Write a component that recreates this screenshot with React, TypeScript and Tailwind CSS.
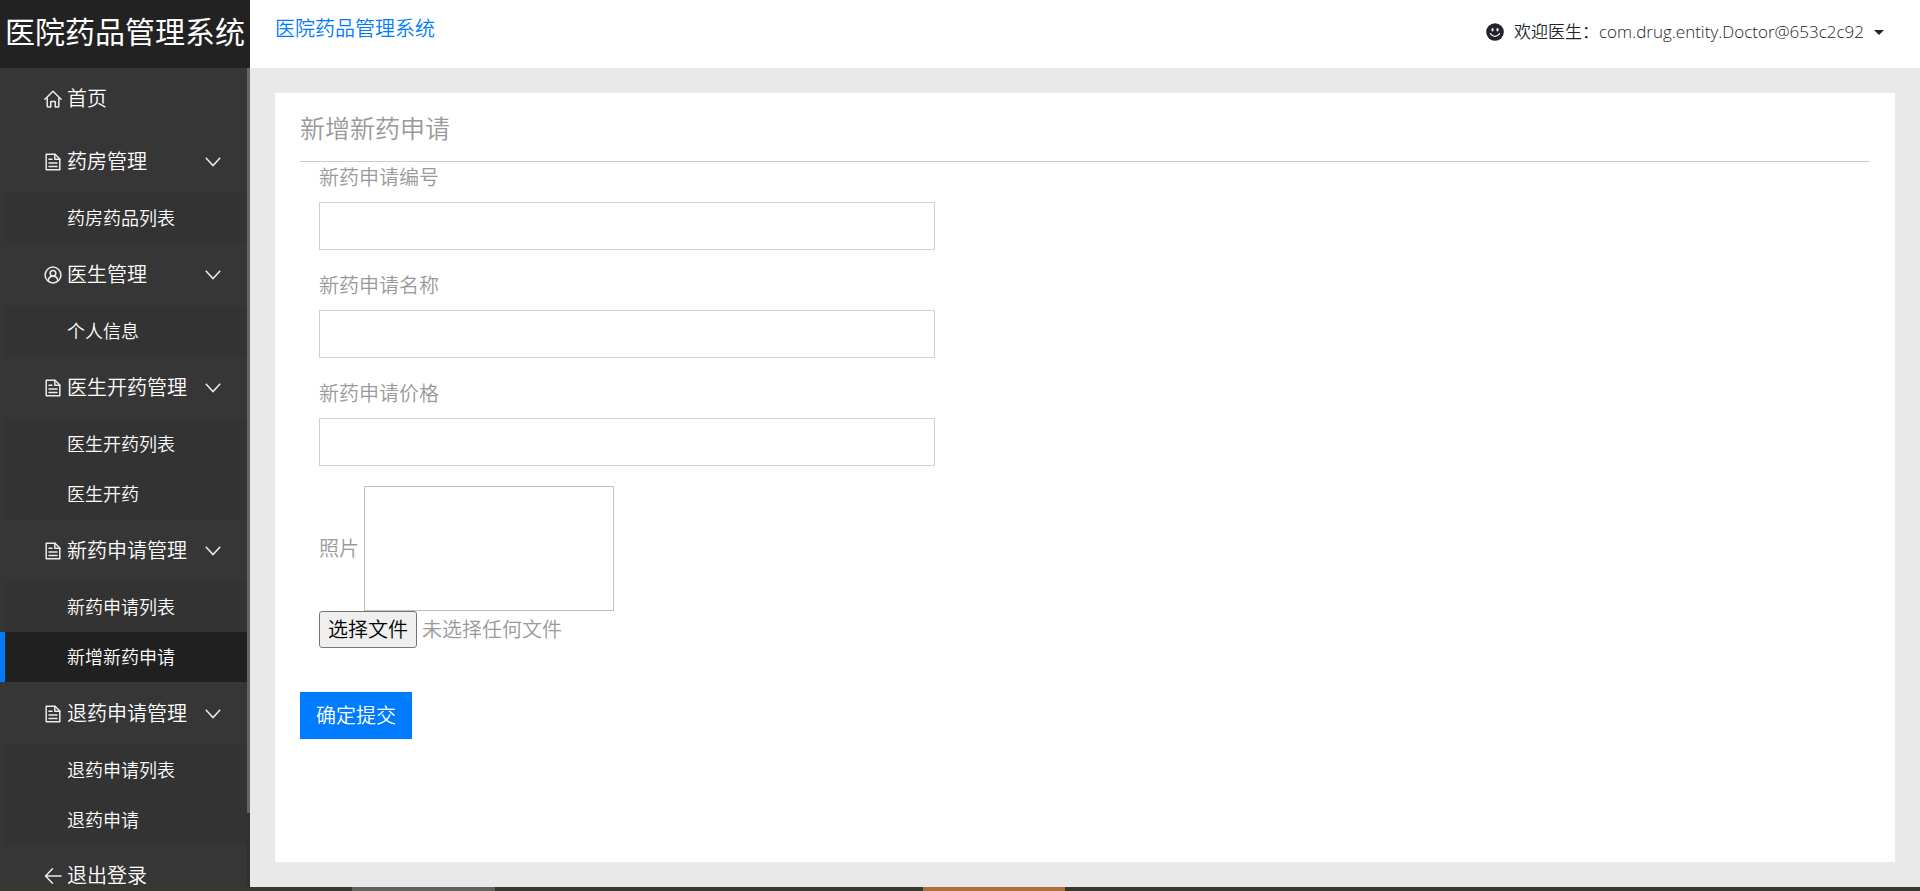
import { useState } from 'react';
import type { ReactNode } from 'react';

type IconName = 'home' | 'file' | 'user' | 'back';

interface MenuGroup {
  title: string;
  icon: IconName;
  items: string[];
}

const GROUPS: MenuGroup[] = [
  { title: '药房管理', icon: 'file', items: ['药房药品列表'] },
  { title: '医生管理', icon: 'user', items: ['个人信息'] },
  { title: '医生开药管理', icon: 'file', items: ['医生开药列表', '医生开药'] },
  { title: '新药申请管理', icon: 'file', items: ['新药申请列表', '新增新药申请'] },
  { title: '退药申请管理', icon: 'file', items: ['退药申请列表', '退药申请'] },
];

const ACTIVE_ITEM = '新增新药申请';

const FIELDS = [
  { id: 'drug-number', label: '新药申请编号' },
  { id: 'drug-name', label: '新药申请名称' },
  { id: 'drug-price', label: '新药申请价格' },
];

const ICON_SHAPES: Record<IconName, ReactNode> = {
  home: (
    <>
      <path d="M.9 9.300 9 1.300l8.100 8" />
      <path d="M3.200 8.300V16.300q0 .6.6.6H6.700V12q0-.6.6-.6h3.400q.6 0 .6.6v4.900h2.900q.6 0 .6-.6V8.300" />
    </>
  ),
  file: (
    <>
      <path d="M2.200 1.200H11L15.800 6V16.800H2.200Z" />
      <path d="M10.800 1.200V6.200H15.800" />
      <path d="M5 6.200h3M5 10h8M5 13.500h8" />
    </>
  ),
  user: (
    <>
      <circle cx="9" cy="9" r="7.900" />
      <circle cx="9" cy="7.200" r="2.800" />
      <path d="M4.200 14.900Q4.500 10.300 9 10.300T13.800 14.900" />
    </>
  ),
  back: <path d="M17 9H1.500M8.500 1.800 1.500 9l7 7.200" />,
};

function MenuIcon({ name }: { name: IconName }) {
  return (
    <svg
      viewBox="0 0 18 18"
      className="size-[18px] shrink-0"
      fill="none"
      stroke="#ececec"
      strokeWidth="1.5"
      strokeLinejoin="round"
      strokeLinecap="round"
      aria-hidden="true"
    >
      {ICON_SHAPES[name]}
    </svg>
  );
}

function Group({ group }: { group: MenuGroup }) {
  const [open, setOpen] = useState(true);
  return (
    <li>
      <button
        type="button"
        aria-expanded={open}
        onClick={() => setOpen(!open)}
        className="flex h-[63px] w-full cursor-pointer items-center gap-[5px] pr-[26px] pl-11 text-left text-xl"
      >
        <MenuIcon name={group.icon} />
        <span className="flex-1">{group.title}</span>
        <svg
          viewBox="0 0 16 10"
          className="h-2.5 w-4"
          fill="none"
          stroke="#ececec"
          strokeWidth="1.5"
          aria-hidden="true"
        >
          <path d="M.8.8 8 8.600 15.200.8" />
        </svg>
      </button>
      {open && (
        <ul>
          {group.items.map((item) => (
            <li key={item}>
              <a
                href="#"
                aria-current={item === ACTIVE_ITEM ? 'page' : undefined}
                className={
                  item === ACTIVE_ITEM
                    ? 'flex h-[50px] items-center border-l-5 border-[#007bff] bg-[#202020] pl-[62px] text-lg'
                    : 'flex h-[50px] items-center border-l-5 border-[#363636] bg-[#333333] pl-[62px] text-lg'
                }
              >
                {item}
              </a>
            </li>
          ))}
        </ul>
      )}
    </li>
  );
}

function Sidebar() {
  return (
    <aside className="flex w-[250px] shrink-0 flex-col bg-[#363636] text-white">
      <h1 className="flex h-[68px] shrink-0 items-center justify-center bg-[#222222] pb-1 text-3xl font-normal whitespace-nowrap">
        医院药品管理系统
      </h1>
      <div className="flex min-h-0 flex-1">
        <nav className="min-w-0 flex-1 overflow-hidden">
          <a href="#" className="flex h-[62px] items-center gap-[5px] pl-11 text-xl leading-none">
            <MenuIcon name="home" />
            首页
          </a>
          <ul>
            {GROUPS.map((group) => (
              <Group key={group.title} group={group} />
            ))}
          </ul>
          <a href="#" className="flex h-[62px] items-center gap-[5px] pl-11 text-xl leading-none">
            <MenuIcon name="back" />
            退出登录
          </a>
        </nav>
        <div className="w-[3px] bg-[#303030]">
          <div className="h-10/11 bg-[#666666]" />
        </div>
      </div>
    </aside>
  );
}

function TopBar() {
  return (
    <header className="flex h-[68px] shrink-0 items-start justify-between bg-white pr-9 pl-[25px]">
      <a href="#" className="pt-3.5 text-xl leading-[30px] text-[#007bff]">
        医院药品管理系统
      </a>
      <button
        type="button"
        className="flex cursor-pointer items-center gap-2.5 pt-[17px] text-[17px] leading-[30px] text-[#212529]"
      >
        <svg viewBox="0 0 18 18" className="size-[18px]" aria-hidden="true">
          <circle cx="9" cy="9" r="8.800" fill="#212529" />
          <ellipse cx="6.500" cy="6.800" rx="1.100" ry="1.700" fill="#fff" />
          <ellipse cx="11.500" cy="6.800" rx="1.100" ry="1.700" fill="#fff" />
          <path
            d="M4.300 10.600Q9 16.200 13.700 10.600"
            fill="none"
            stroke="#fff"
            strokeWidth="1.2"
            strokeLinecap="round"
          />
        </svg>
        <span>欢迎医生：com.drug.entity.Doctor@653c2c92</span>
        <svg viewBox="0 0 10 5" className="h-[5px] w-2.5" aria-hidden="true">
          <path d="M0 0h10L5 5Z" fill="#212529" />
        </svg>
      </button>
    </header>
  );
}

function RequestForm() {
  const [fileName, setFileName] = useState('未选择任何文件');
  return (
    <form onSubmit={(event) => event.preventDefault()}>
      <div className="w-5/12 px-[19px]">
        {FIELDS.map((field) => (
          <div key={field.id} className="mb-5">
            <label htmlFor={field.id} className="mb-2 block text-xl leading-8">
              {field.label}
            </label>
            <input
              id={field.id}
              type="text"
              className="block h-12 w-full border border-[#d0d0d0] bg-white px-4 text-xl text-[#495057] outline-none focus:border-[#80bdff]"
            />
          </div>
        ))}
        <div className="flex items-center gap-[5px]">
          <span className="text-xl">照片</span>
          <div
            role="img"
            aria-label="照片"
            className="h-[125px] w-[250px] border border-[#c0c0c0]"
          />
        </div>
        <div className="flex items-center gap-[5px] text-xl">
          <input
            id="photo"
            type="file"
            className="peer sr-only"
            onChange={(event) => setFileName(event.target.files?.[0]?.name ?? '未选择任何文件')}
          />
          <label
            htmlFor="photo"
            className="flex h-[37px] cursor-pointer items-center rounded-[3px] border border-[#767676] bg-[#efefef] px-2 text-black peer-focus-visible:outline-2"
          >
            选择文件
          </label>
          <span>{fileName}</span>
        </div>
      </div>
      <button
        type="submit"
        className="mt-11 h-[47px] cursor-pointer bg-[#007bff] px-4 text-xl text-white"
      >
        确定提交
      </button>
    </form>
  );
}

export default function App() {
  return (
    <div className="flex h-screen flex-col overflow-hidden font-['Open_Sans','Noto_Sans_CJK_SC',sans-serif] font-[350]">
      <div className="flex min-h-0 flex-1">
        <Sidebar />
        <div className="flex min-w-0 flex-1 flex-col">
          <TopBar />
          <main className="flex min-h-0 flex-1 bg-[#e9e9e9] p-[25px]">
            <section className="flex-1 bg-white px-[25px] text-[#999999]">
              <h2 className="border-b border-[#cccccc] pt-[17px] pb-3.5 text-[25px] leading-[37px] font-[350]">
                新增新药申请
              </h2>
              <RequestForm />
            </section>
          </main>
        </div>
      </div>
      <div className="flex h-1 shrink-0 bg-[#363a2c]">
        <div className="ml-[352px] w-[143px] bg-[#60635a]" />
        <div className="ml-[428px] w-[142px] bg-[#b07038]" />
      </div>
    </div>
  );
}
